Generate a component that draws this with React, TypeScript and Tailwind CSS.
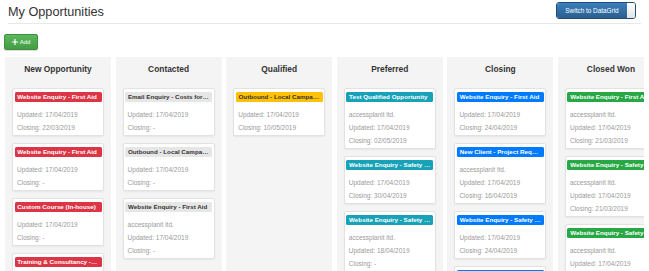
import React from 'react'

type Tone = 'danger' | 'light' | 'warning' | 'info' | 'primary' | 'success'

interface Opp {
  title: string
  company?: string
  updated: string
  closing: string
}

interface Stage {
  name: string
  tone: Tone
  items: Opp[]
}

const badgeTone: Record<Tone, string> = {
  danger: 'bg-[#dc3545] text-white',
  light: 'bg-[#e6e6e6] text-[#333]',
  warning: 'bg-[#ffc107] text-[#333]',
  info: 'bg-[#17a2b8] text-white',
  primary: 'bg-[#007bff] text-white',
  success: 'bg-[#28a745] text-white',
}

const stages: Stage[] = [
  {
    name: 'New Opportunity',
    tone: 'danger',
    items: [
      { title: 'Website Enquiry - First Aid', updated: '17/04/2019', closing: '22/03/2019' },
      { title: 'Website Enquiry - First Aid', updated: '17/04/2019', closing: '-' },
      { title: 'Custom Course (In-house)', updated: '17/04/2019', closing: '-' },
      { title: 'Training & Consultancy - Fire Safety', updated: '17/04/2019', closing: '-' },
    ],
  },
  {
    name: 'Contacted',
    tone: 'light',
    items: [
      { title: 'Email Enquiry - Costs for Training', updated: '17/04/2019', closing: '-' },
      { title: 'Outbound - Local Campaign', updated: '17/04/2019', closing: '-' },
      { title: 'Website Enquiry - First Aid', company: 'accessplanit ltd.', updated: '17/04/2019', closing: '-' },
    ],
  },
  {
    name: 'Qualified',
    tone: 'warning',
    items: [{ title: 'Outbound - Local Campaign', updated: '17/04/2019', closing: '10/05/2019' }],
  },
  {
    name: 'Preferred',
    tone: 'info',
    items: [
      { title: 'Test Qualified Opportunity', company: 'accessplanit ltd.', updated: '17/04/2019', closing: '02/05/2019' },
      { title: 'Website Enquiry - Safety Training', updated: '17/04/2019', closing: '30/04/2019' },
      { title: 'Website Enquiry - Safety Training', company: 'accessplanit ltd.', updated: '18/04/2019', closing: '-' },
    ],
  },
  {
    name: 'Closing',
    tone: 'primary',
    items: [
      { title: 'Website Enquiry - First Aid', updated: '17/04/2019', closing: '24/04/2019' },
      { title: 'New Client - Project Request', company: 'accessplanit ltd.', updated: '17/04/2019', closing: '16/04/2019' },
      { title: 'Website Enquiry - Safety Training', updated: '17/04/2019', closing: '24/04/2019' },
      { title: 'Online - Ireland Course Request', updated: '17/04/2019', closing: '-' },
    ],
  },
  {
    name: 'Closed Won',
    tone: 'success',
    items: [
      { title: 'Website Enquiry - First Aid', company: 'accessplanit ltd.', updated: '17/04/2019', closing: '21/03/2019' },
      { title: 'Website Enquiry - Safety Training', company: 'accessplanit ltd.', updated: '17/04/2019', closing: '21/03/2019' },
      { title: 'Website Enquiry - Safety Training', company: 'accessplanit ltd.', updated: '17/04/2019', closing: '-' },
    ],
  },
]

function OppCard({ opp, tone }: { opp: Opp; tone: Tone }) {
  return (
    <div className="bg-white border border-[#e2e2e2] rounded-[2px] shadow-[0_1px_2px_rgba(0,0,0,0.06)] px-[1.5px] pt-[3px] pb-[1.5px]">
      <div className={`h-[10px] leading-[10px] px-[2.8px] rounded-[1.5px] text-[6.25px] font-bold whitespace-nowrap overflow-hidden text-ellipsis ${badgeTone[tone]}`}>
        {opp.title}
      </div>
      <div className="mt-[5.5px] pl-[2.5px] text-[6.5px] leading-[13px] text-[#9a9a9a]">
        {opp.company && <div>{opp.company}</div>}
        <div>Updated: {opp.updated}</div>
        <div>Closing: {opp.closing}</div>
      </div>
    </div>
  )
}

export default function App() {
  return (
    <div className="w-[649px] h-[271px] overflow-hidden bg-white font-['Liberation_Sans',Arial,sans-serif]">
      {/* Page header */}
      <div className="mx-[8px] h-[24px] border-b border-[#e8e8e8] flex justify-between items-start">
        <h1 className="mt-[4.5px] text-[12.7px] leading-[15px] text-[#333]">My Opportunities</h1>
        <div className="mt-[2px] mr-[5px] flex h-[17px] rounded-[3px] border border-[#204d74] overflow-hidden">
          <div className="w-[70px] flex items-center justify-center bg-gradient-to-b from-[#3a80bd] to-[#2a5f8f] text-white text-[6.4px]">
            Switch to DataGrid
          </div>
          <div className="w-[8px] bg-gradient-to-b from-[#ffffff] to-[#e2e2e2]" />
        </div>
      </div>

      {/* Add */}
      <div className="mt-[10px] ml-[4px]">
        <button className="h-[16px] w-[34px] flex items-center justify-center gap-[2px] rounded-[2px] border border-[#3e8f3e] bg-gradient-to-b from-[#5cb85c] to-[#449d44] text-white text-[6px] shadow-[0_1px_1px_rgba(0,0,0,0.15)]">
          <svg width="6" height="6" viewBox="0 0 10 10">
            <path d="M4 0h2v4h4v2H6v4H4V6H0V4h4z" fill="white" />
          </svg>
          Add
        </button>
      </div>

      {/* Board */}
      <div className="mt-[7px] w-[644px] overflow-hidden">
        <div className="flex gap-[4.6px] pl-[5px]">
          {stages.map((s) => (
            <div key={s.name} className="w-[106px] shrink-0 h-[220px] bg-[#f4f4f4] px-[7px] pt-[7px]">
              <div className="text-center text-[8.4px] leading-[10px] font-bold text-[#333] mb-[14px]">{s.name}</div>
              <div className="flex flex-col gap-[7px]">
                {s.items.map((o, i) => (
                  <OppCard key={i} opp={o} tone={s.tone} />
                ))}
              </div>
            </div>
          ))}
        </div>
      </div>
    </div>
  )
}
